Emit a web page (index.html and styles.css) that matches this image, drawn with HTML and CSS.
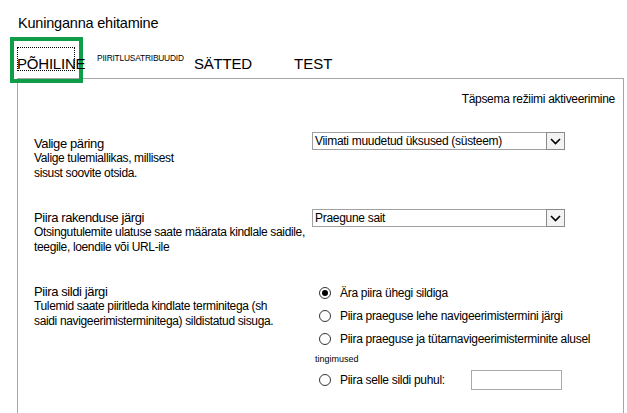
FILE: index.html
```html
<!DOCTYPE html>
<html lang="et">
<head>
<meta charset="utf-8">
<title>Kuninganna ehitamine</title>
<link rel="stylesheet" href="styles.css">
</head>
<body>
<div class="title">Kuninganna ehitamine</div>
<div class="highlight"></div>
<div class="tabs">
  <div class="tab tab-main"><span class="focus"></span>PÕHILINE</div>
  <div class="tab tab-small">PIIRITLUSATRIBUUDID</div>
  <div class="tab tab-settings">SÄTTED</div>
  <div class="tab">TEST</div>
</div>
<div class="panel">
  <div class="advanced">Täpsema režiimi aktiveerimine</div>

  <div class="section">
    <div class="label">
      <div class="label-title">Valige päring</div>
      <div class="label-desc">Valige tulemiallikas, millisest<br>sisust soovite otsida.</div>
    </div>
    <div class="field field-q">
      <div class="select"><span class="select-text">Viimati muudetud üksused (süsteem)</span><span class="select-btn"><svg width="11" height="7" viewBox="0 0 11 7"><path d="M1 1 L5.5 5.5 L10 1" fill="none" stroke="#000" stroke-width="1.6"/></svg></span></div>
    </div>
  </div>

  <div class="section">
    <div class="label">
      <div class="label-title">Piira rakenduse järgi</div>
      <div class="label-desc">Otsingutulemite ulatuse saate määrata kindlale saidile,<br>teegile, loendile või URL-ile</div>
    </div>
    <div class="field field-app">
      <div class="select"><span class="select-text">Praegune sait</span><span class="select-btn"><svg width="11" height="7" viewBox="0 0 11 7"><path d="M1 1 L5.5 5.5 L10 1" fill="none" stroke="#000" stroke-width="1.6"/></svg></span></div>
    </div>
  </div>

  <div class="section">
    <div class="label">
      <div class="label-title">Piira sildi järgi</div>
      <div class="label-desc">Tulemid saate piiritleda kindlate terminitega (sh<br>saidi navigeerimisterminitega) sildistatud sisuga.</div>
    </div>
    <div class="field field-tags">
      <div class="radio-row"><span class="radio checked"></span><span>Ära piira ühegi sildiga</span></div>
      <div class="radio-row"><span class="radio"></span><span>Piira praeguse lehe navigeerimistermini järgi</span></div>
      <div class="radio-row"><span class="radio"></span><span>Piira praeguse ja tütarnavigeerimisterminite alusel</span></div>
      <div class="cond">tingimused</div>
      <div class="radio-row"><span class="radio"></span><span class="last-label">Piira selle sildi puhul:</span><span class="textbox"></span></div>
    </div>
  </div>
</div>
</body>
</html>
```

FILE: styles.css
```css
* { box-sizing: border-box; }

html, body {
  margin: 0;
  padding: 0;
  background: #fff;
  overflow: hidden;
}

body {
  font-family: "Liberation Sans", Arial, sans-serif;
  color: #000;
  width: 627px;
  height: 413px;
  position: relative;
}

.title {
  margin: 15px 0 0 18px;
  font-size: 14.5px;
  line-height: 17px;
  letter-spacing: -0.2px;
}

.tabs {
  display: flex;
  align-items: flex-start;
  margin: 23px 0 0 17px;
  height: 20px;
  font-size: 15px;
  line-height: 17px;
  position: relative;
  z-index: 1;
}

.tab { white-space: nowrap; }

.tab-main {
  width: 80px;
  position: relative;
  letter-spacing: -0.2px;
}

.focus {
  position: absolute;
  left: 0;
  top: -8px;
  width: 58px;
  height: 24px;
  border: 1px dotted #000;
}

.tab-small {
  width: 97px;
  font-size: 8.4px;
  line-height: 9px;
  margin-top: -1px;
  letter-spacing: -0.2px;
}

.tab-settings {
  width: 100px;
  letter-spacing: -0.2px;
}

.highlight {
  position: absolute;
  left: 10px;
  top: 37px;
  width: 73px;
  height: 46px;
  border: 4px solid #0f9d48;
}

.panel {
  margin: 3px 0 0 17px;
  width: 607px;
  height: 340px;
  border: 1px solid #a6a6a6;
  border-bottom: none;
  padding: 12px 8px 0 16px;
}

.advanced {
  text-align: right;
  font-size: 12px;
  line-height: 16px;
  letter-spacing: -0.3px;
}

.section {
  display: grid;
  grid-template-columns: 278px 1fr;
  align-items: start;
  margin-top: 29px;
}

.section:first-of-type { margin-top: 32px; }

.label-title {
  font-size: 13px;
  line-height: 15px;
  letter-spacing: -0.4px;
}

.label-desc {
  font-size: 12px;
  line-height: 15px;
  letter-spacing: -0.35px;
}

.field-q { margin-top: -4px; }
.field-app { margin-top: -1px; }
.field-tags { margin-top: -3px; }

.select {
  display: flex;
  width: 253px;
  height: 18px;
  border: 1px solid #a0a0a0;
  font-size: 12px;
  line-height: 16px;
  letter-spacing: -0.3px;
}

.select-text {
  flex: 1;
  padding-left: 2px;
}

.select-btn {
  width: 19px;
  margin: -1px -1px -1px 0;
  border: 1px solid #8a8a8a;
  background: #f3f3f3;
  display: flex;
  align-items: center;
  justify-content: center;
}

.radio-row {
  display: flex;
  align-items: center;
  height: 23px;
  font-size: 12px;
  letter-spacing: -0.3px;
}

.radio {
  width: 12px;
  height: 12px;
  border: 1px solid #333;
  border-radius: 50%;
  margin: 0 9px 0 7px;
  display: flex;
  align-items: center;
  justify-content: center;
  flex: none;
}

.radio.checked::after {
  content: "";
  width: 6px;
  height: 6px;
  border-radius: 50%;
  background: #000;
}

.cond {
  font-size: 9px;
  line-height: 18px;
  padding-left: 3px;
}

.last-label { width: 131px; }

.textbox {
  width: 91px;
  height: 20px;
  border: 1px solid #aaa;
}
```
